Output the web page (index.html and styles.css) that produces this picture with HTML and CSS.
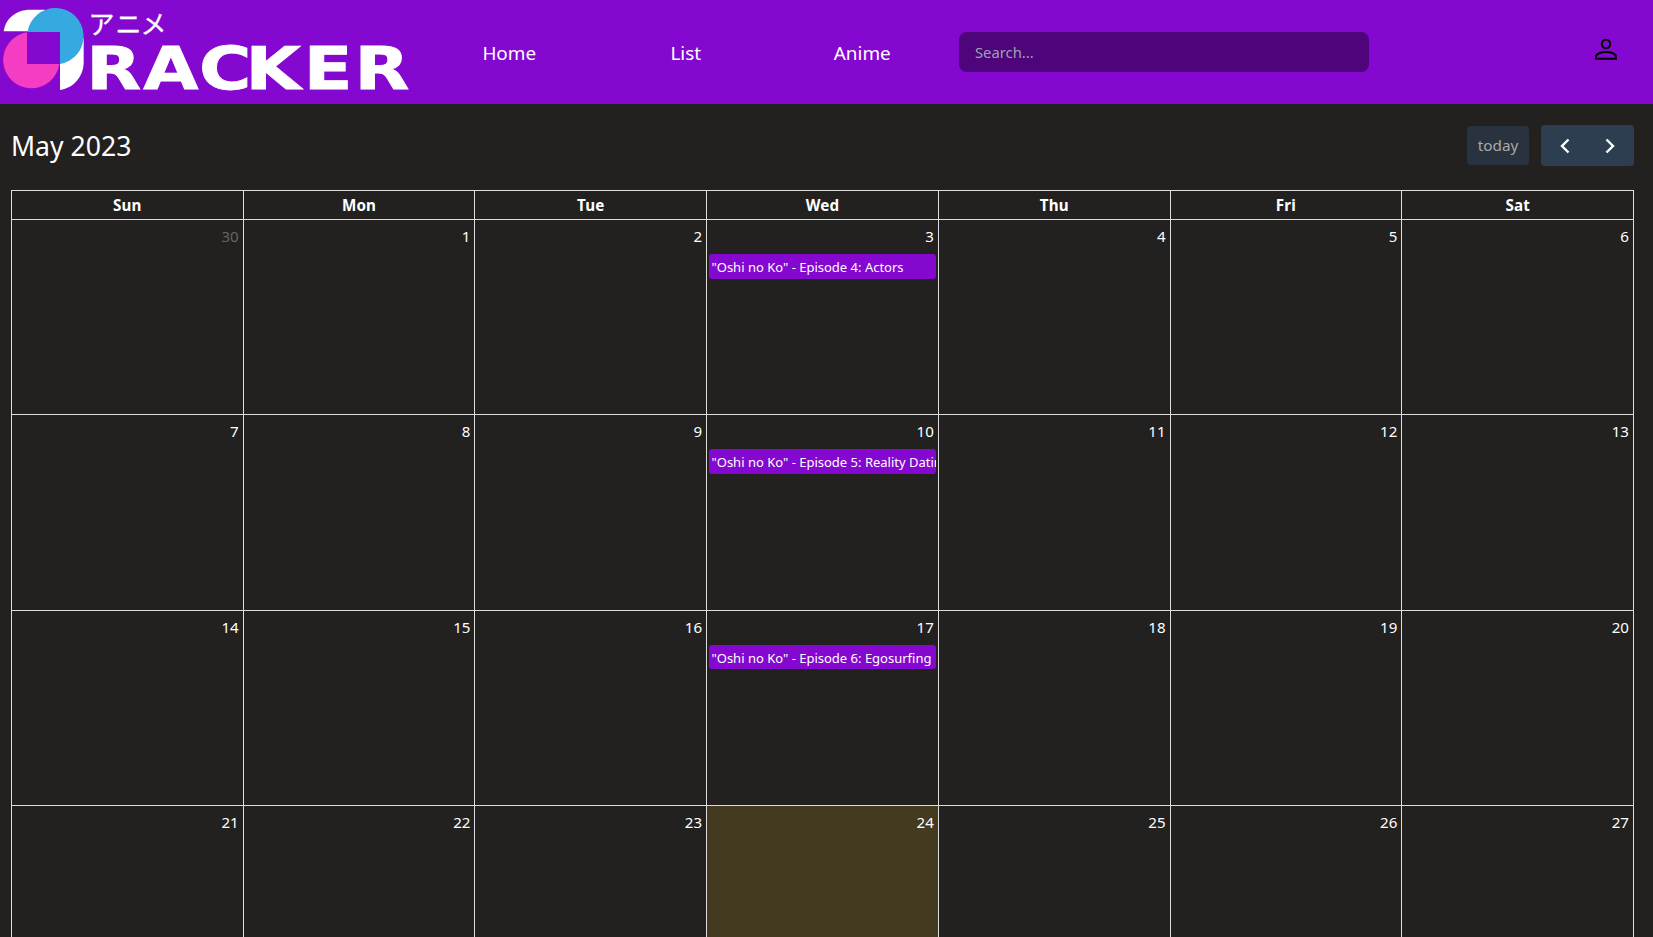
FILE: index.html
```html
<!DOCTYPE html>
<html lang="en">
<head>
<meta charset="utf-8">
<title>Anime Tracker</title>
<link rel="stylesheet" href="styles.css">
</head>
<body>
<header class="navbar">
  <a class="brand">
    <svg class="logo" width="420" height="104" viewBox="0 0 420 104">
      <path fill="#fff" d="M3.7 31.3C5.500 18 17 9.800 30 9.800H45L28 31.300Z"/>
      <path fill="#fff" d="M60 90V60L83.700 38V62C83.700 76 74 88 60 90Z"/>
      <path fill="#f53dc3" d="M27 32.3V64H59.3A28.200 28.200 0 1 1 27 32.3Z"/>
      <path fill="#37a9e1" d="M27.5 32A28.200 28.200 0 1 1 60 64V32Z"/>
      <text class="logo-kana" x="88.5 115.5 140.5" y="34">アニメ</text>
      <g transform="translate(0 89.3) scale(1.22 1)">
        <text class="logo-word" x="70.7 117.4 163.2 201.2 249 290.6" y="0">RACKER</text>
      </g>
    </svg>
  </a>
  <nav class="links">
    <a class="link">Home</a>
    <a class="link">List</a>
    <a class="link">Anime</a>
  </nav>
  <input class="search" type="text" placeholder="Search...">
  <svg class="user" width="24" height="24" viewBox="0 0 24 24" fill="none" stroke="#000" stroke-width="2">
    <circle cx="12" cy="6" r="4.2"/>
    <path d="M2 20.700V19C2 15.700 7 14 12 14S22 15.700 22 19V20.700Z"/>
  </svg>
</header>
<main class="calendar">
  <div class="toolbar">
    <h2 class="title">May 2023</h2>
    <div class="actions">
      <button class="today-btn" disabled>today</button>
      <div class="pager">
        <button class="page-btn"><svg width="10" height="16" viewBox="0 0 10 16"><path d="M8.5 1.5L2 8L8.5 14.5"/></svg></button>
        <button class="page-btn"><svg width="10" height="16" viewBox="0 0 10 16"><path d="M1.5 1.5L8 8L1.5 14.5"/></svg></button>
      </div>
    </div>
  </div>
  <div class="grid">
    <div class="head">Sun</div><div class="head">Mon</div><div class="head">Tue</div><div class="head">Wed</div><div class="head">Thu</div><div class="head">Fri</div><div class="head">Sat</div>
    <div class="day other">30</div><div class="day">1</div><div class="day">2</div>
    <div class="day">3<div class="event">"Oshi no Ko" - Episode 4: Actors</div></div>
    <div class="day">4</div><div class="day">5</div><div class="day">6</div>
    <div class="day">7</div><div class="day">8</div><div class="day">9</div>
    <div class="day">10<div class="event">"Oshi no Ko" - Episode 5: Reality Dating</div></div>
    <div class="day">11</div><div class="day">12</div><div class="day">13</div>
    <div class="day">14</div><div class="day">15</div><div class="day">16</div>
    <div class="day">17<div class="event">"Oshi no Ko" - Episode 6: Egosurfing</div></div>
    <div class="day">18</div><div class="day">19</div><div class="day">20</div>
    <div class="day">21</div><div class="day">22</div><div class="day">23</div>
    <div class="day current">24</div>
    <div class="day">25</div><div class="day">26</div><div class="day">27</div>
  </div>
</main>
</body>
</html>
```
FILE: styles.css
```css
* { box-sizing: border-box; }
body {
  margin: 0;
  height: 937px;
  overflow: hidden;
  background: #22211f;
  color: #fff;
  font-family: "Noto Sans", "Noto Sans CJK JP", sans-serif;
}
.navbar {
  display: flex;
  align-items: flex-start;
  height: 104px;
  background: #8508d0;
}
.brand { width: 420px; height: 104px; }
.logo { display: block; }
.logo-kana { font: 400 26px "Noto Sans CJK JP", sans-serif; fill: #fff; stroke: #fff; stroke-width: 0.3; }
.logo-word { font: 700 58.5px "DejaVu Sans", sans-serif; fill: #fff; stroke: #fff; stroke-width: 0.8; }
.links {
  display: grid;
  grid-template-columns: repeat(3, 176.5px);
  width: 539px;
  padding: 40px 0 0 1px;
}
.link {
  text-align: center;
  font-size: 18.9px;
  line-height: 26px;
}
.search {
  width: 410px;
  height: 40px;
  margin-top: 32px;
  padding: 0 16px;
  border: 0;
  border-radius: 8px;
  background: #4e047a;
  color: #fff;
  font: 14.8px "Noto Sans", sans-serif;
}
.search::placeholder { color: #9ca3af; opacity: 1; }
.user { margin: 38px 0 0 225px; }
.calendar { height: 833px; padding: 21px 19px 0 11px; overflow: hidden; }
.toolbar {
  display: flex;
  justify-content: space-between;
  align-items: center;
  height: 41px;
  margin-bottom: 24px;
}
.title { margin: 0; font-size: 26.6px; font-weight: 400; line-height: 40px; }
.actions { display: flex; align-items: center; gap: 12px; }
.today-btn {
  width: 62px;
  height: 39px;
  padding: 0 0 2px;
  border: 0;
  border-radius: 4px;
  background: #29333f;
  color: #a9a9aa;
  font: 15.3px "Noto Sans", sans-serif;
}
.pager {
  display: flex;
  width: 93px;
  height: 41px;
  padding: 0 1px;
  border-radius: 4px;
  background: #2c3e50;
}
.page-btn {
  display: flex;
  flex: 1;
  align-items: center;
  justify-content: center;
  padding: 0;
  border: 0;
  background: none;
}
.page-btn path { fill: none; stroke: #fff; stroke-width: 2.4; }
.grid {
  display: grid;
  grid-template-columns: repeat(7, 1fr);
  grid-template-rows: 29px 195.4px 195.4px 195.4px 195.4px;
  border-top: 1px solid #ddd;
  border-right: 1px solid #ddd;
}
.head, .day {
  min-width: 0;
  border-left: 1px solid #ddd;
  border-bottom: 1px solid #ddd;
}
.head {
  text-align: center;
  font-size: 15.2px;
  font-weight: 700;
  letter-spacing: 0.15px;
  line-height: 29px;
}
.day {
  padding: 3px 4px 0 1px;
  text-align: right;
  font-size: 15.1px;
  line-height: 26px;
}
.other { color: #666562; }
.current { background: #433a20; }
.event {
  height: 24.5px;
  margin: 5px -2px 0 1px;
  padding-left: 2.3px;
  overflow: hidden;
  border-radius: 3px;
  background: #8508d0;
  text-align: left;
  white-space: nowrap;
  font-size: 13px;
  line-height: 26px;
}
```
